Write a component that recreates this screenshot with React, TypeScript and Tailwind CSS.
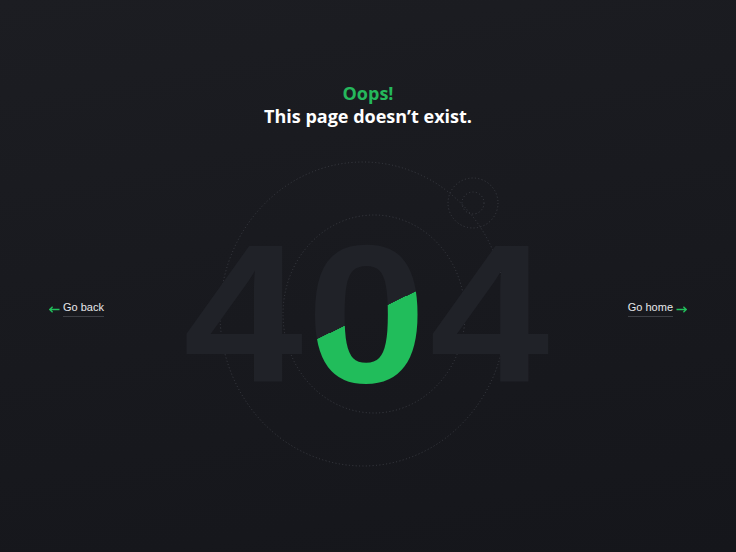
import React from "react";

const Arrow = ({ dir }: { dir: "left" | "right" }) => (
  <svg width="11" height="7" viewBox="0 0 11 7" className={dir === "left" ? "" : "rotate-180"}>
    <path d="M0.8 3.5H10.5M3.6 0.8L0.8 3.5L3.6 6.2" fill="none" stroke="#22c05c" strokeWidth="1.3" />
  </svg>
);

const Rings = () => (
  <svg className="absolute inset-0" width="736" height="552" viewBox="0 0 736 552">
    <g fill="none" stroke="#3b3d44" strokeWidth="1" strokeDasharray="1 2.4">
      <ellipse cx="363" cy="314" rx="143" ry="152" />
      <ellipse cx="374" cy="314" rx="91" ry="99" />
      <circle cx="473" cy="203" r="25" />
      <circle cx="473" cy="203" r="11" />
    </g>
  </svg>
);

export default function App() {
  return (
    <div className="relative h-[552px] w-full overflow-hidden bg-[linear-gradient(170deg,#1c1d22_0%,#18191e_55%,#15161b_100%)] font-['Liberation_Sans',sans-serif]">
      <Rings />

      {/* big 404, lower half of the 0 is green */}
      <div className="absolute inset-x-0 top-[217px]">
        <div className="origin-center scale-x-[1.1] text-center text-[196px] font-bold leading-none tracking-[3px] text-[#202228] select-none">
          4
          <span className="bg-[linear-gradient(152deg,#202228_50%,#21bd5b_50%)] bg-clip-text text-transparent">0</span>
          4
        </div>
      </div>

      <div className="relative flex h-full flex-col">
        <div className="pt-[82px] text-center font-['Open_Sans',sans-serif] font-bold">
          <div className="text-[18px] leading-[22px] text-[#25b85c]">Oops!</div>
          <div className="text-[18px] leading-[24px] text-white">This page doesn’t exist.</div>
        </div>

        <div className="flex items-center justify-between px-[49px] pt-[173px]">
          <a className="flex items-center gap-[3px] text-[11px] text-[#e6e7ea]">
            <Arrow dir="left" />
            <span className="border-b border-[#3d3f45] pb-[2px] leading-[13px]">Go back</span>
          </a>
          <a className="flex items-center gap-[3px] text-[11px] text-[#e6e7ea]">
            <span className="border-b border-[#3d3f45] pb-[2px] leading-[13px]">Go home</span>
            <Arrow dir="right" />
          </a>
        </div>
      </div>
    </div>
  );
}
